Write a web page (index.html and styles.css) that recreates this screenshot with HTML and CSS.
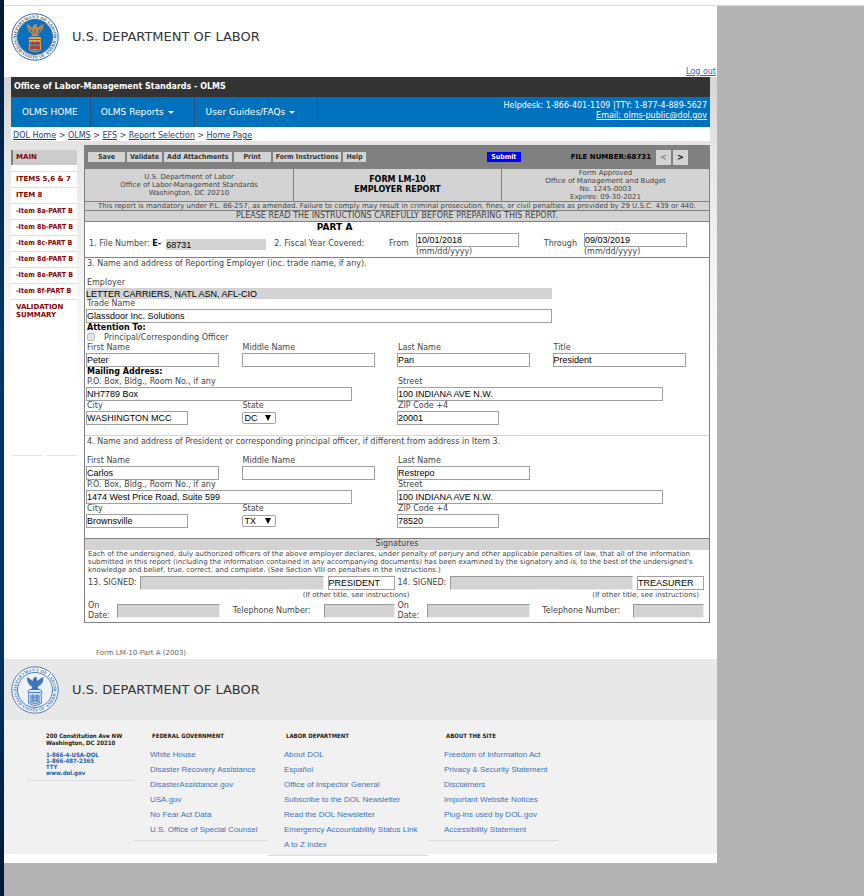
FILE: index.html
```html
<!DOCTYPE html>
<html lang="en">
<head>
<meta charset="utf-8">
<title>OLMS - Form LM-10 Employer Report</title>
<link rel="stylesheet" href="styles.css">
</head>
<body>
<svg class="defs" aria-hidden="true">
  <symbol id="seal" viewBox="0 0 48 48" overflow="visible">
    <defs><path id="ring-top" d="M5.500 24a18.500 18.500 0 0 1 37 0"/><path id="ring-bottom" d="M2.600 24a21.400 21.400 0 0 0 42.800 0"/></defs>
    <circle class="seal-rim" cx="24" cy="24" r="23.200"/>
    <circle class="seal-field" cx="24" cy="24" r="17.500"/>
    <text class="seal-text"><textPath href="#ring-top" startOffset="50%" text-anchor="middle">DEPARTMENT OF LABOR</textPath></text>
    <text class="seal-text"><textPath href="#ring-bottom" startOffset="50%" text-anchor="middle">UNITED STATES OF AMERICA</textPath></text>
    <path class="seal-eagle" d="M16 11l2.500 1.500 3 2.500 1-3 2-1 2 1-1 1 .8 2 3.200-2.500 3-1.500-.5 4.500-2.500 3.500-3 2 1.500 2.500h-8l1.500-2.500-3-2-2-3.500z"/>
    <path class="seal-line" d="M17.500 14.500l4 3.500M19 17.500l3 2M31 14.500l-4 3.500M29.500 17.500l-3 2M24.200 16v5"/>
    <path class="seal-shield" d="M17 25l2-1.500h10l2 1.500-.8 3.500.3 8.500q-2 2-6.500 2.500-4.500-.5-6.500-2.500l.3-8.500z"/>
    <path class="seal-band" d="M19 29h10v2.500H19zM19 33h10v3H19z"/>
    <path class="seal-line" d="M18.500 26.500h11M19 32h10M19 36.500q5 2 10 0M22 28v8M26 28v8"/>
  </symbol>
</svg>
<div class="shell">
  <div class="page">
    <header class="masthead">
      <svg class="seal seal-color" role="img" aria-label="Department of Labor seal"><use href="#seal"/></svg>
      <span class="agency">U.S. DEPARTMENT OF LABOR</span>
      <a class="logout" href="#">Log out</a>
    </header>
    <div class="backdrop">
      <div class="office">Office of Labor-Management Standards - OLMS</div>
      <nav class="topnav">
        <a href="#">OLMS HOME</a>
        <a href="#">OLMS Reports <i class="caret"></i></a>
        <a href="#">User Guides/FAQs <i class="caret"></i></a>
        <div class="helpdesk">Helpdesk: 1-866-401-1109 |TTY: 1-877-4-889-5627<br><a href="#">Email: olms-public@dol.gov</a></div>
      </nav>
      <nav class="crumbs"><a href="#">DOL Home</a> &gt; <a href="#">OLMS</a> &gt; <a href="#">EFS</a> &gt; <a href="#">Report Selection</a> &gt; <a href="#">Home Page</a></nav>
      <div class="workspace">
        <nav class="side">
          <a class="current" href="#">MAIN</a>
          <a href="#">ITEMS 5,6 &amp; 7</a>
          <a href="#">ITEM 8</a>
          <a class="sub" href="#">-Item 8a-PART B</a>
          <a class="sub" href="#">-Item 8b-PART B</a>
          <a class="sub" href="#">-Item 8c-PART B</a>
          <a class="sub" href="#">-Item 8d-PART B</a>
          <a class="sub" href="#">-Item 8e-PART B</a>
          <a class="sub" href="#">-Item 8f-PART B</a>
          <a href="#">VALIDATION SUMMARY</a>
          <div class="side-end"><span></span><span></span></div>
        </nav>
        <main>
          <form class="report">
            <div class="toolbar">
              <div class="tools">
                <button type="button">Save</button>
                <button type="button">Validate</button>
                <button type="button">Add Attachments</button>
                <button type="button">Print</button>
                <button type="button">Form Instructions</button>
                <button type="button">Help</button>
              </div>
              <button type="button" class="submit">Submit</button>
              <div class="pager">
                <span>FILE NUMBER:68731</span>
                <button type="button" disabled>&lt;</button>
                <button type="button">&gt;</button>
              </div>
            </div>
            <div class="heading">
              <div>U.S. Department of Labor<br>Office of Labor-Management Standards<br>Washington, DC 20210</div>
              <h1>FORM LM-10<br>EMPLOYER REPORT</h1>
              <div>Form Approved<br>Office of Management and Budget<br>No. 1245-0003<br>Expires: 09-30-2021</div>
            </div>
            <p class="notice small">This report is mandatory under P.L. 86-257, as amended. Failure to comply may result in criminal prosecution, fines, or civil penalties as provided by 29 U.S.C. 439 or 440.</p>
            <p class="notice">PLEASE READ THE INSTRUCTIONS CAREFULLY BEFORE PREPARING THIS REPORT.</p>
            <section class="part">
              <h2>PART A</h2>
              <div class="period">
                <label for="fileno">1. File Number: <b>E-</b></label>
                <input id="fileno" class="flat" value="68731" readonly>
                <span class="fiscal">2. Fiscal Year Covered:</span>
                <label for="from" class="to-input">From</label>
                <div class="date"><input id="from" value="10/01/2018"><span>(mm/dd/yyyy)</span></div>
                <label for="through" class="to-input">Through</label>
                <div class="date"><input id="through" value="09/03/2019"><span>(mm/dd/yyyy)</span></div>
              </div>
            </section>
            <section class="block">
              <h3>3. Name and address of Reporting Employer (inc. trade name, if any).</h3>
              <div class="fields">
                <div class="field full"><label for="employer">Employer</label><input id="employer" class="flat" value="LETTER CARRIERS, NATL ASN, AFL-CIO" readonly></div>
                <div class="field full"><label for="trade">Trade Name</label><input id="trade" value="Glassdoor Inc. Solutions"></div>
                <b class="row">Attention To:</b>
                <div class="row check"><input type="checkbox" id="officer"><label for="officer">Principal/Corresponding Officer</label></div>
                <div class="field"><label for="f3">First Name</label><input id="f3" value="Peter"></div>
                <div class="field"><label for="m3">Middle Name</label><input id="m3"></div>
                <div class="field"><label for="l3">Last Name</label><input id="l3" value="Pan"></div>
                <div class="field"><label for="t3">Title</label><input id="t3" value="President"></div>
                <b class="row">Mailing Address:</b>
                <div class="field wide"><label for="p3">P.O. Box, Bldg., Room No., if any</label><input id="p3" value="NH7789 Box"></div>
                <div class="field wide"><label for="s3">Street</label><input id="s3" value="100 INDIANA AVE N.W."></div>
                <div class="field short"><label for="c3">City</label><input id="c3" value="WASHINGTON MCC"></div>
                <div class="field"><label for="st3">State</label><span class="pick"><select id="st3"><option>DC</option><option>TX</option></select></span></div>
                <div class="field short"><label for="z3">ZIP Code +4</label><input id="z3" value="20001"></div>
              </div>
            </section>
            <section class="block second">
              <h3>4. Name and address of President or corresponding principal officer, if different from address in Item 3.</h3>
              <div class="fields">
                <div class="field"><label for="f4">First Name</label><input id="f4" value="Carlos"></div>
                <div class="field"><label for="m4">Middle Name</label><input id="m4"></div>
                <div class="field"><label for="l4">Last Name</label><input id="l4" value="Restrepo"></div>
                <div class="field wide first"><label for="p4">P.O. Box, Bldg., Room No., if any</label><input id="p4" value="1474 West Price Road, Suite 599"></div>
                <div class="field wide"><label for="s4">Street</label><input id="s4" value="100 INDIANA AVE N.W."></div>
                <div class="field short"><label for="c4">City</label><input id="c4" value="Brownsville"></div>
                <div class="field"><label for="st4">State</label><span class="pick"><select id="st4"><option>TX</option><option>DC</option></select></span></div>
                <div class="field short"><label for="z4">ZIP Code +4</label><input id="z4" value="78520"></div>
              </div>
            </section>
            <section class="signatures">
              <h3>Signatures</h3>
              <p>Each of the undersigned, duly authorized officers of the above employer declares, under penalty of perjury and other applicable penalties of law, that all of the information submitted in this report (including the information contained in any accompanying documents) has been examined by the signatory and is, to the best of the undersigned's knowledge and belief, true, correct, and complete. (See Section VIII on penalties in the instructions.)</p>
              <div class="signers">
                <div class="signer">
                  <div class="sign"><label for="sg1">13. SIGNED:</label><input id="sg1" class="locked" readonly><input class="role" aria-label="Title of first signatory" value="PRESIDENT"></div>
                  <div class="hint">(If other title, see instructions)</div>
                  <div class="when"><label for="d1">On Date:</label><input id="d1" class="locked" readonly><label for="ph1">Telephone Number:</label><input id="ph1" class="locked phone" readonly></div>
                </div>
                <div class="signer">
                  <div class="sign"><label for="sg2">14. SIGNED:</label><input id="sg2" class="locked" readonly><input class="role" aria-label="Title of second signatory" value="TREASURER"></div>
                  <div class="hint late">(If other title, see instructions)</div>
                  <div class="when"><label for="d2">On Date:</label><input id="d2" class="locked" readonly><label for="ph2">Telephone Number:</label><input id="ph2" class="locked phone" readonly></div>
                </div>
              </div>
            </section>
          </form>
          <div class="form-id">Form LM-10-Part A (2003)</div>
        </main>
      </div>
    </div>
    <footer>
      <div class="foot-head">
        <svg class="seal seal-mono" role="img" aria-label="Department of Labor seal"><use href="#seal"/></svg>
        <span class="agency">U.S. DEPARTMENT OF LABOR</span>
      </div>
      <div class="foot-cols">
        <address>200 Constitution Ave NW<br>Washington, DC 20210
          <div class="contact"><a href="#">1-866-4-USA-DOL</a><a href="#">1-866-487-2365</a><a href="#">TTY</a><a href="#">www.dol.gov</a></div>
        </address>
        <div class="links"><h4>FEDERAL GOVERNMENT</h4><a href="#">White House</a><a href="#">Disaster Recovery Assistance</a><a href="#">DisasterAssistance.gov</a><a href="#">USA.gov</a><a href="#">No Fear Act Data</a><a href="#">U.S. Office of Special Counsel</a></div>
        <div class="links tall"><h4>LABOR DEPARTMENT</h4><a href="#">About DOL</a><a href="#">Español</a><a href="#">Office of Inspector General</a><a href="#">Subscribe to the DOL Newsletter</a><a href="#">Read the DOL Newsletter</a><a href="#">Emergency Accountability Status Link</a><a href="#">A to Z Index</a></div>
        <div class="links"><h4>ABOUT THE SITE</h4><a href="#">Freedom of Information Act</a><a href="#">Privacy &amp; Security Statement</a><a href="#">Disclaimers</a><a href="#">Important Website Notices</a><a href="#">Plug-ins used by DOL.gov</a><a href="#">Accessibility Statement</a></div>
      </div>
    </footer>
  </div>
</div>
</body>
</html>
```
FILE: styles.css
```css
* { box-sizing: border-box; }
body { margin: 0; background: #b3b3b3; font: 8px/10px "DejaVu Sans", sans-serif; color: #444; }
h1, h2, h3, h4, p { margin: 0; font: inherit; }
a { color: #1b3f7d; }
button, input, select { margin: 0; border-radius: 0; }
.defs { position: absolute; width: 0; height: 0; }

.shell { min-height: 100vh; display: grid; grid-template-columns: 4px 713fr 147fr; align-items: start; background: linear-gradient(#fff 5px, #d8d8d8 5px, #d8d8d8 6px, #b3b3b3 6px); }
.shell::before { content: ""; align-self: stretch; background: linear-gradient(#001733, #003567 35%, #003567 70%, #001733); }
.page { background: #fff; margin-top: 6px; padding-bottom: 9px; }

.seal { width: 48px; height: 48px; overflow: visible; }
.seal-text { font: bold 4px "DejaVu Serif", serif; fill: currentColor; }
.seal-rim { fill: #fff; stroke: currentColor; }
.seal-field { fill: var(--field); stroke: currentColor; }
.seal-line { fill: none; stroke: currentColor; stroke-width: 1; }
.seal-color { color: #38678f; --field: #0b70c0; --eagle: #c98a45; --shield: #e2a55c; --band: #b9401f; }
.seal-mono { color: #4a7dc0; --field: #eef2f8; --eagle: #3f70b5; --shield: #dce8f5; --band: #84a9d6; }
.seal-eagle { fill: var(--eagle); }
.seal-shield { fill: var(--shield); stroke: currentColor; }
.seal-band { fill: var(--band); }

.agency { font-size: 13px; line-height: 16px; color: #333; }
.masthead { display: flex; align-items: center; gap: 13px; height: 71px; padding: 0 0 9px 7px; }
.logout { align-self: flex-end; margin: 0 1px -9px auto; color: #4a5fa5; }

.backdrop { padding: 0 7px; background: linear-gradient(#d6d6d6, #e8e8e8 15%, #fff 55%); }
.office { background: #333; color: #fff; font-weight: bold; line-height: 20px; padding-left: 3px; }
.topnav { display: flex; background: #0071bc; color: #fff; line-height: 30px; font-size: 9px; }
.topnav > a { color: #fff; text-decoration: none; padding: 0 12px 0 11px; border-right: 1px solid #22527a; }
.topnav > a:nth-child(2) { padding: 0 20px 0 10px; }
.topnav > a:nth-child(3) { padding: 0 22px 0 11px; }
.caret { display: inline-block; margin-left: 1px; border: 3px solid transparent; border-top-color: #fff; border-bottom: 0; vertical-align: 1px; }
.helpdesk { margin-left: auto; padding: 4px 3px 0 0; text-align: right; line-height: 10px; font-size: 8px; }
.helpdesk a { color: #fff; }
.crumbs { background: #fff; padding: 4px 2px 0; color: #444; }

.workspace { display: grid; grid-template-columns: 66px 1fr; gap: 7px; padding-top: 4px; align-items: start; }
.side { display: flex; flex-direction: column; margin-top: 5px; background: #fff; font-size: 7px; line-height: 8px; font-weight: bold; }
.side a { color: #8b0000; text-decoration: none; padding: 3px 0 4px 5px; border-top: 1px solid #ddd; white-space: nowrap; }
.side .sub { font-family: "DejaVu Sans Condensed", "DejaVu Sans", sans-serif; }
.side .current { background: #ccc; border: 0; border-left: 2px solid #808080; padding: 4px 3px; margin-bottom: 6px; line-height: 7px; }
.side a:last-of-type { white-space: normal; }
.side-end { display: flex; gap: 5px; padding-top: 132px; }
.side-end span { flex: 1; border-bottom: 1px solid #e4e4e4; }

.report { border: 1px solid #808080; border-top: 0; background: #fff; }
.toolbar { display: flex; align-items: center; background: #808080; height: 24px; padding: 0 22px 0 4px; margin: 0 -1px; }
.tools { display: flex; gap: 2px; }
.toolbar button { border: 0; background: #d3d3d3; color: #333; font: bold 7px/10px "DejaVu Sans Condensed", "DejaVu Sans", sans-serif; padding: 0 3px; white-space: nowrap; }
.tools button:first-child, .tools button:nth-child(4) { width: 37px; }
.toolbar .submit { background: #00f; color: #fff; margin-left: auto; width: 34px; }
.pager { display: flex; align-items: center; gap: 2px; margin-left: 50px; color: #000; font-weight: bold; font-size: 7px; }
.pager span { margin-right: 3px; }
.pager button { width: 15px; height: 15px; padding: 0; color: #000; font-size: 9px; }
.pager button:disabled { color: #808080; }
.heading { display: grid; grid-template-columns: repeat(3, 1fr); border-bottom: 1px solid #808080; background: #d3d3d3; text-align: center; font-size: 7px; line-height: 8px; }
.heading > * { display: grid; align-content: center; }
.heading > * + * { border-left: 1px solid #808080; }
.heading h1 { font-size: 8px; line-height: 10px; font-weight: bold; color: #000; }
.notice { background: #d3d3d3; border-bottom: 1px solid #808080; text-align: center; }
.small { font-size: 7px; line-height: 8px; white-space: nowrap; }

.part { border-bottom: 1px solid #808080; }
.part h2 { width: 80%; font-weight: bold; font-size: 9px; line-height: 11px; text-align: center; color: #000; }
.period { display: flex; padding: 0 22px 0 4px; height: 24px; }
.period > label, .fiscal, .period > .flat { margin-top: 6px; }
.period b, .row { color: #000; }
.period > .flat { width: 100px; margin-left: 5px; }
.fiscal { margin-left: 8px; }
.to-input { margin-left: auto; margin-right: 7px; }
.date { width: 103px; display: flex; flex-direction: column; }

input:not([type]), select { display: block; width: 100%; height: 14px; padding: 0; border: 1px solid #a0a0a0; background: #fff; font: 9px/12px "Liberation Sans", Arial, sans-serif; color: #000; }
input.flat:not([type]) { border: 0; background: #d3d3d3; height: 11px; }
input.locked:not([type]) { background: #d3d3d3; border-color: #999 #eee #eee #999; }
.block { padding: 0 1px 10px; border-bottom: 1px solid #d3d3d3; }
.block.second { border-color: #808080; }
.block h3 { padding: 1px 1px 9px; }
.fields { display: grid; grid-template-columns: repeat(4, 1fr); }
.field { width: 133px; }
.field label { display: block; padding-left: 1px; }
.full { grid-column: 1 / 4; width: auto; margin-right: 1px; }
.wide { grid-column: span 2; width: 266px; }
.first { grid-column: 1 / 3; }
.short { width: 102px; }
.row { grid-column: 1 / -1; padding-left: 1px; }
.check { display: flex; gap: 9px; color: #444; }
.check input { appearance: none; width: 8px; height: 8px; border: 1px solid #bbb; background: #e4e4e4; border-radius: 2px; }
.pick { display: grid; width: 34px; align-items: center; }
.pick select, .pick::after { grid-area: 1 / 1; }
.pick select { appearance: none; height: 12px; line-height: 10px; border-radius: 2px; padding-left: 2px; margin-top: 1px; }
.pick::after { content: ""; justify-self: end; margin-right: 5px; border: 3px solid transparent; border-top: 6px solid #000; border-bottom: 0; pointer-events: none; }

.signatures h3 { background: #d3d3d3; text-align: center; padding-bottom: 1px; }
.signatures p { padding: 0 3px; font-size: 7px; line-height: 8px; }
.signers { display: grid; grid-template-columns: 1fr 1fr; gap: 3px; padding: 2px 5px 1px 3px; }
.sign { display: flex; align-items: center; }
.sign label { width: 52px; white-space: nowrap; }
.sign .locked { flex: 1; }
.sign .role { width: 67px; margin-left: 4px; }
.hint { font-size: 7px; line-height: 11px; text-align: right; margin-right: -15px; }
.late { margin-right: 5px; }
.when { display: grid; grid-template-columns: 29px 103px 1fr 71px; align-items: center; }
.when label + input + label { text-align: center; }
.form-id { font-size: 7px; line-height: 8px; padding: 26px 12px 2px; color: #666; }

.foot-head { display: flex; align-items: center; gap: 13px; height: 61px; padding-left: 7px; background: #e8e8e8; }
.foot-cols { display: grid; grid-template-columns: 107px 134px 160px 130px; align-items: start; padding: 12px 0 13px 23px; background: #f1f1f1; }
address { font: bold 6px/7px "DejaVu Sans Condensed", "DejaVu Sans", sans-serif; color: #222; padding: 0 0 4px 19px; border-bottom: 1px solid #ddd; white-space: nowrap; }
.contact { display: grid; line-height: 6px; padding-top: 6px; }
.contact a { color: #1b5fa8; text-decoration: none; }
.links { display: flex; flex-direction: column; padding: 0 0 3px 16px; border-bottom: 1px solid #ddd; font: 8px/15px "Liberation Sans", Arial, sans-serif; white-space: nowrap; }
.links h4 { font: bold 6px/8px "DejaVu Sans Condensed", "DejaVu Sans", sans-serif; color: #222; padding: 0 0 7px 2px; }
.links a { color: #3d74b8; text-decoration: none; }
.tall { margin-bottom: -17px; background: #f1f1f1; }
```
